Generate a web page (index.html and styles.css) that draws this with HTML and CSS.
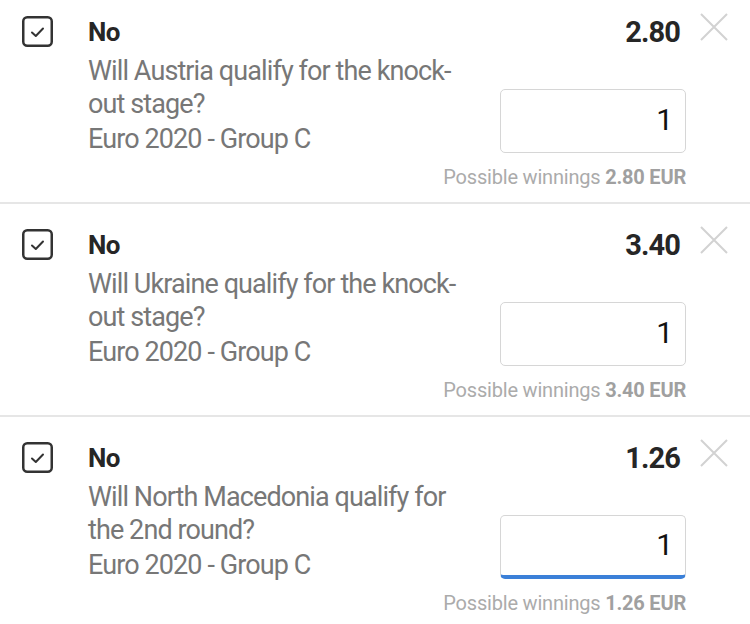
FILE: index.html
```html
<!DOCTYPE html>
<html>
<head>
<meta charset="utf-8">
<link rel="stylesheet" href="styles.css">
</head>
<body>
<div class="slip">
  <div class="item">
    <div class="check"><svg viewBox="0 0 31 31" width="31" height="31"><rect x="1.25" y="1.25" width="28.5" height="28.5" rx="4" fill="none" stroke="#333" stroke-width="2.5"/><path d="M10 16.5 L13.8 20 L21 12.5" fill="none" stroke="#333" stroke-width="2" stroke-linecap="round" stroke-linejoin="round"/></svg></div>
    <div class="main">
      <div class="left">
        <div class="pick">No</div>
        <div class="q">Will Austria qualify for the knock-out stage?</div>
        <div class="league">Euro 2020 - Group C</div>
      </div>
      <div class="right">
        <div class="odds">2.80</div>
        <div class="stake">1</div>
        <div class="win">Possible winnings <b>2.80 EUR</b></div>
      </div>
    </div>
    <div class="close"><svg viewBox="0 0 28 28" width="28" height="28"><path d="M1 1 L27 27 M27 1 L1 27" stroke="#d2d2d2" stroke-width="2"/></svg></div>
  </div>
  <div class="item">
    <div class="check"><svg viewBox="0 0 31 31" width="31" height="31"><rect x="1.25" y="1.25" width="28.5" height="28.5" rx="4" fill="none" stroke="#333" stroke-width="2.5"/><path d="M10 16.5 L13.8 20 L21 12.5" fill="none" stroke="#333" stroke-width="2" stroke-linecap="round" stroke-linejoin="round"/></svg></div>
    <div class="main">
      <div class="left">
        <div class="pick">No</div>
        <div class="q">Will Ukraine qualify for the knock-out stage?</div>
        <div class="league">Euro 2020 - Group C</div>
      </div>
      <div class="right">
        <div class="odds">3.40</div>
        <div class="stake">1</div>
        <div class="win">Possible winnings <b>3.40 EUR</b></div>
      </div>
    </div>
    <div class="close"><svg viewBox="0 0 28 28" width="28" height="28"><path d="M1 1 L27 27 M27 1 L1 27" stroke="#d2d2d2" stroke-width="2"/></svg></div>
  </div>
  <div class="item">
    <div class="check"><svg viewBox="0 0 31 31" width="31" height="31"><rect x="1.25" y="1.25" width="28.5" height="28.5" rx="4" fill="none" stroke="#333" stroke-width="2.5"/><path d="M10 16.5 L13.8 20 L21 12.5" fill="none" stroke="#333" stroke-width="2" stroke-linecap="round" stroke-linejoin="round"/></svg></div>
    <div class="main">
      <div class="left">
        <div class="pick">No</div>
        <div class="q">Will North Macedonia qualify for the 2nd round?</div>
        <div class="league">Euro 2020 - Group C</div>
      </div>
      <div class="right">
        <div class="odds">1.26</div>
        <div class="stake focused">1</div>
        <div class="win">Possible winnings <b>1.26 EUR</b></div>
      </div>
    </div>
    <div class="close"><svg viewBox="0 0 28 28" width="28" height="28"><path d="M1 1 L27 27 M27 1 L1 27" stroke="#d2d2d2" stroke-width="2"/></svg></div>
  </div>
</div>
</body>
</html>
```
FILE: styles.css
```css
* { box-sizing: border-box; }
html, body { margin: 0; padding: 0; background: #fff; }
body { font-family: Roboto, "Noto Sans", sans-serif; width: 750px; height: 624px; overflow: hidden; }
.slip { display: flex; flex-direction: column; margin-top: -9px; }
.item {
  display: flex;
  align-items: flex-start;
  padding: 26px 22px 13px 22px;
  border-bottom: 2px solid #e6e6e6;
}
.check { width: 31px; height: 31px; margin-right: 35px; margin-top: -1px; flex: none; }
.check svg { display: block; }
.main { flex: 1; display: flex; justify-content: space-between; }
.left { width: 385px; }
.pick { font-size: 26px; font-weight: 700; line-height: 30px; color: #262626; letter-spacing: -0.5px; }
.q { margin-top: 8px; font-size: 27px; line-height: 33px; color: #777; letter-spacing: -0.9px; }
.league { margin-top: 2px; font-size: 27px; line-height: 33px; color: #777; letter-spacing: -0.9px; }
.right { width: 186px; display: flex; flex-direction: column; align-items: flex-end; }
.odds { font-size: 29px; font-weight: 700; line-height: 30px; color: #262626; padding-right: 6px; letter-spacing: -0.9px; }
.stake {
  margin-top: 42px;
  width: 186px;
  height: 64px;
  border: 1.5px solid #d6d6d6;
  border-radius: 5px;
  font-size: 30px;
  line-height: 60px;
  text-align: right;
  padding-right: 12px;
  color: #111;
}
.stake.focused { border-bottom: 4px solid #3b80d8; line-height: 58px; }
.win { margin-top: 12px; font-size: 20px; line-height: 24px; color: #ababab; letter-spacing: -0.2px; white-space: nowrap; }
.win b { color: #a0a0a0; font-weight: 700; }
.close { width: 28px; height: 28px; margin-left: 14px; margin-top: -4px; flex: none; }
.close svg { display: block; }
```
